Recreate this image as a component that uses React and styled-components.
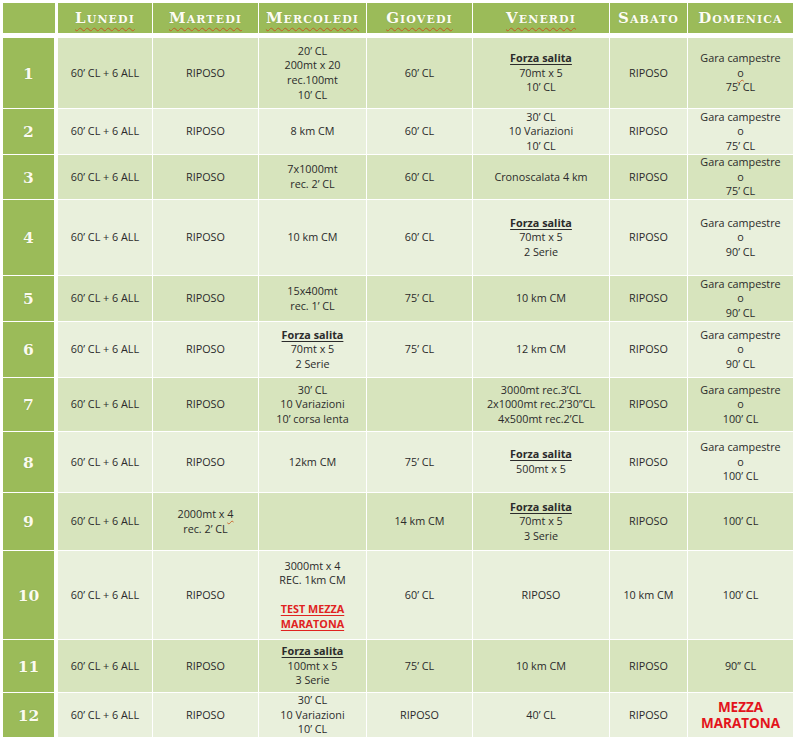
import React from "react";
import styled, { createGlobalStyle } from "styled-components";

const GlobalStyle = createGlobalStyle`
  html, body { margin: 0; padding: 0; background: #ffffff; }
  body { font-family: "Open Sans", "Noto Sans", sans-serif; }
`;

const COLS = "54px 94px 105px 107px 105px 136px 77px 105px";
const GREEN = "#9bbb59";

const Table = styled.div`
  display: flex;
  flex-direction: column;
  gap: 1px;
  padding: 3px;
  width: max-content;
`;

const HeaderRow = styled.div`
  display: grid;
  grid-template-columns: ${COLS};
  column-gap: 1px;
  height: 30px;
  margin-bottom: 4px;
`;

const HeadCorner = styled.div`
  background: ${GREEN};
  margin-right: 2px;
`;

const HeadCell = styled.div`
  background: ${GREEN};
  display: flex;
  align-items: center;
  justify-content: center;
  color: #fdfdf3;
  font-family: "DejaVu Serif", "Liberation Serif", serif;
  font-weight: bold;
  font-variant: small-caps;
  font-size: 15px;
  letter-spacing: 1.1px;
  text-shadow: 0 0 1px rgba(90, 110, 40, 0.35);
  text-decoration: ${(p) => (p.$spell ? "underline wavy #c9652c" : "none")};
  text-decoration-thickness: 1px;
  text-underline-offset: 4px;
`;

const Row = styled.div`
  display: grid;
  grid-template-columns: ${COLS};
  column-gap: 1px;
  height: ${(p) => p.$h}px;
`;

const NumCell = styled.div`
  background: ${GREEN};
  margin-right: 3px;
  display: flex;
  align-items: center;
  justify-content: center;
  color: #fbfbef;
  font-family: "DejaVu Serif", "Liberation Serif", serif;
  font-weight: bold;
  font-size: 15.5px;
  text-shadow: 0 0 1px rgba(90, 110, 40, 0.35);
`;

const Cell = styled.div`
  background: ${(p) => (p.$dark ? "#d7e4bd" : "#e9f0dc")};
  display: flex;
  flex-direction: column;
  align-items: center;
  justify-content: center;
  text-align: center;
  color: #2b2b2b;
  font-family: "Open Sans", "Noto Sans", sans-serif;
  font-size: 10.8px;
  line-height: 14.6px;
  white-space: nowrap;
`;

const Line = styled.div`
  min-height: 14.6px;
`;

const Strong = styled.span`
  font-weight: bold;
  text-decoration: underline;
  text-underline-offset: 2px;
`;

const RedLink = styled.span`
  font-weight: bold;
  color: #e0231f;
  text-decoration: underline;
  text-underline-offset: 2px;
`;

const BigLine = styled.div`
  font-weight: bold;
  color: #e3141b;
  font-size: 13.5px;
  line-height: 16px;
`;

const Spell = styled.span`
  text-decoration: underline wavy #c9652c;
  text-decoration-thickness: 1px;
  text-underline-offset: 2px;
`;

const DAYS = [
  { name: "Lunedi", spell: true },
  { name: "Martedi", spell: true },
  { name: "Mercoledi", spell: true },
  { name: "Giovedi", spell: true },
  { name: "Venerdi", spell: true },
  { name: "Sabato", spell: false },
  { name: "Domenica", spell: false },
];

const FS = <Strong>Forza salita</Strong>;
const LUN = ["60’ CL + 6 ALL"];
const RIP = ["RIPOSO"];
const gara = (t, sq) => ["Gara campestre", sq ? <Spell>o</Spell> : "o", t];

const ROWS = [
  {
    h: 70,
    cells: [LUN, RIP, ["20’ CL", "200mt x 20", "rec.100mt", "10’ CL"], ["60’ CL"], [FS, "70mt x 5", "10’ CL"], RIP, gara("75’ CL", true)],
  },
  {
    h: 45,
    cells: [LUN, RIP, ["8 km CM"], ["60’ CL"], ["30’ CL", "10 Variazioni", "10’ CL"], RIP, gara("75’ CL")],
  },
  {
    h: 44,
    cells: [LUN, RIP, ["7x1000mt", "rec. 2’ CL"], ["60’ CL"], ["Cronoscalata 4 km"], RIP, gara("75’ CL")],
  },
  {
    h: 75,
    cells: [LUN, RIP, ["10 km CM"], ["60’ CL"], [FS, "70mt x 5", "2 Serie"], RIP, gara("90’ CL")],
  },
  {
    h: 45,
    cells: [LUN, RIP, ["15x400mt", "rec. 1’ CL"], ["75’ CL"], ["10 km CM"], RIP, gara("90’ CL")],
  },
  {
    h: 55,
    cells: [LUN, RIP, [FS, "70mt x 5", "2 Serie"], ["75’ CL"], ["12 km CM"], RIP, gara("90’ CL")],
  },
  {
    h: 53,
    cells: [LUN, RIP, ["30’ CL", "10 Variazioni", "10’ corsa lenta"], [], ["3000mt rec.3’CL", "2x1000mt rec.2’30”CL", "4x500mt rec.2’CL"], RIP, gara("100’ CL")],
  },
  {
    h: 60,
    cells: [LUN, RIP, ["12km CM"], ["75’ CL"], [FS, "500mt x 5"], RIP, gara("100’ CL")],
  },
  {
    h: 57,
    cells: [LUN, [<>2000mt x <Spell>4</Spell></>, "rec. 2’ CL"], [], ["14 km CM"], [FS, "70mt x 5", "3 Serie"], RIP, ["100’ CL"]],
  },
  {
    h: 88,
    cells: [
      LUN,
      RIP,
      ["3000mt x 4", "REC. 1km CM", "", <RedLink>TEST MEZZA</RedLink>, <RedLink>MARATONA</RedLink>],
      ["60’ CL"],
      RIP,
      ["10 km CM"],
      ["100’ CL"],
    ],
  },
  {
    h: 52,
    cells: [LUN, RIP, [<Strong>Forza salita</Strong>, "100mt x 5", "3 Serie"], ["75’ CL"], ["10 km CM"], RIP, ["90’’ CL"]],
  },
  {
    h: 44,
    cells: [LUN, RIP, ["30’ CL", "10 Variazioni", "10’ CL"], RIP, ["40’ CL"], RIP, null],
    final: true,
  },
];

export default function App() {
  return (
    <>
      <GlobalStyle />
      <Table>
        <HeaderRow>
          <HeadCorner />
          {DAYS.map((d) => (
            <HeadCell key={d.name} $spell={d.spell}>
              {d.name}
            </HeadCell>
          ))}
        </HeaderRow>
        {ROWS.map((r, i) => (
          <Row key={i} $h={r.h}>
            <NumCell>{i + 1}</NumCell>
            {r.cells.map((lines, j) =>
              lines === null ? (
                <Cell key={j} $dark={i % 2 === 0}>
                  <BigLine>MEZZA</BigLine>
                  <BigLine>MARATONA</BigLine>
                </Cell>
              ) : (
                <Cell key={j} $dark={i % 2 === 0}>
                  {lines.map((ln, k) => (
                    <Line key={k}>{ln}</Line>
                  ))}
                </Cell>
              )
            )}
          </Row>
        ))}
      </Table>
    </>
  );
}
